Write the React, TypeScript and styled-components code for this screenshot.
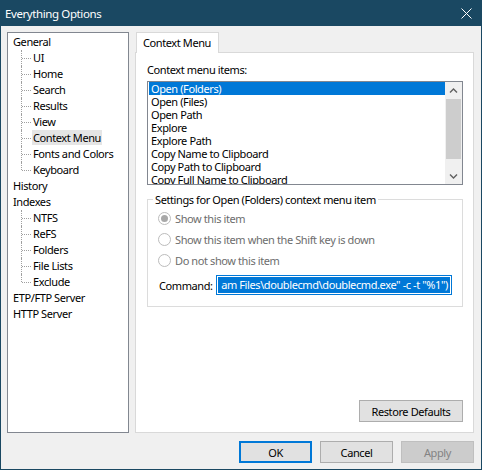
import styled, { createGlobalStyle } from "styled-components";

const GlobalStyle = createGlobalStyle`
  html, body {
    margin: 0;
    padding: 0;
    background: #f0f0f0;
  }
  body {
    font-family: "Noto Sans", "Liberation Sans", sans-serif;
    font-size: 11px;
    letter-spacing: -0.4px;
    color: #000;
  }
  * {
    box-sizing: border-box;
  }
`;

const Window = styled.div`
  display: flex;
  flex-direction: column;
  width: 482px;
  height: 470px;
  background: #f0f0f0;
  border: 1px solid #1a4862;
  border-top: none;
`;

const TitleBar = styled.div`
  display: flex;
  align-items: center;
  justify-content: space-between;
  height: 26px;
  padding: 0 9px 0 4px;
  background: #1a4862;
  color: #fff;
  font-size: 11.5px;
`;

const Body = styled.div`
  display: flex;
  flex: 1;
  gap: 6px;
  padding: 6px 7px 0 6px;
  min-height: 0;
`;

const Tree = styled.div`
  width: 122px;
  padding-top: 1px;
  background: #fff;
  border: 1px solid #828790;
`;

const TopNode = styled.div`
  height: 16px;
  line-height: 16px;
  padding-left: 5px;
`;

const ChildNode = styled.div<{ $last?: boolean }>`
  position: relative;
  height: 16px;
  line-height: 16px;
  padding-left: 25px;

  &::before {
    content: "";
    position: absolute;
    left: 13px;
    top: 0;
    height: ${(p) => (p.$last ? "8px" : "16px")};
    border-left: 1px dotted #a0a0a0;
  }

  &::after {
    content: "";
    position: absolute;
    left: 14px;
    top: 8px;
    width: 9px;
    border-top: 1px dotted #a0a0a0;
  }
`;

const NodeLabel = styled.span<{ $selected?: boolean }>`
  display: inline-block;
  height: 15px;
  line-height: 15px;
  margin-left: -1px;
  padding: 0 1px;
  background: ${(p) => (p.$selected ? "#e5e5e5" : "transparent")};
`;

const RightColumn = styled.div`
  display: flex;
  flex-direction: column;
  flex: 1;
`;

const TabStrip = styled.div`
  display: flex;
  height: 20px;
  padding-left: 1px;
`;

const Tab = styled.div`
  position: relative;
  z-index: 1;
  width: 83px;
  height: 21px;
  padding-left: 6px;
  line-height: 19px;
  background: #fff;
  border: 1px solid #d9d9d9;
  border-bottom: none;
`;

const Panel = styled.div`
  display: flex;
  flex-direction: column;
  flex: 1;
  padding: 9px 10px 10px 11px;
  background: #fff;
  border: 1px solid #d9d9d9;
`;

const FieldLabel = styled.div`
  line-height: 15px;
  margin-bottom: 4px;
`;

const ListBox = styled.div`
  display: flex;
  height: 104px;
  border: 1px solid #828790;
`;

const ListItems = styled.div`
  flex: 1;
  padding-left: 1px;
  overflow: hidden;
`;

const ListItem = styled.div<{ $selected?: boolean }>`
  height: 13px;
  line-height: 13px;
  padding-left: 2px;
  white-space: nowrap;
  background: ${(p) => (p.$selected ? "#0078d7" : "transparent")};
  color: ${(p) => (p.$selected ? "#fff" : "#000")};
`;

const ScrollBar = styled.div`
  display: flex;
  flex-direction: column;
  align-items: center;
  width: 17px;
  background: #f0f0f0;
`;

const ScrollArrow = styled.div`
  display: flex;
  align-items: center;
  justify-content: center;
  width: 100%;
  height: 17px;
`;

const ScrollTrack = styled.div`
  flex: 1;
  width: 100%;
  display: flex;
  justify-content: center;
`;

const Thumb = styled.div`
  width: 15px;
  height: 60px;
  background: #cdcdcd;
`;

const GroupBox = styled.fieldset`
  margin: 7px 0 0;
  padding: 0;
  min-width: 0;
  border: 1px solid #dcdcdc;
`;

const GroupTitle = styled.legend`
  margin-left: 5px;
  padding: 0 2px;
  line-height: 15px;
`;

const GroupBody = styled.div`
  padding: 1px 10px 11px 10px;
`;

const RadioRow = styled.div`
  display: flex;
  align-items: center;
  gap: 4px;
  height: 21px;
  color: #6d6d6d;
`;

const RadioCircle = styled.span<{ $checked?: boolean }>`
  display: flex;
  align-items: center;
  justify-content: center;
  width: 13px;
  height: 13px;
  border-radius: 50%;
  border: 1px solid #bcbcbc;
  background: #fff;

  &::after {
    content: "";
    display: ${(p) => (p.$checked ? "block" : "none")};
    width: 7px;
    height: 7px;
    border-radius: 50%;
    background: #a8a8a8;
  }
`;

const CommandRow = styled.div`
  display: flex;
  align-items: center;
  height: 20px;
  margin-top: 4px;
  padding-left: 1px;
`;

const CommandLabel = styled.span`
  flex: none;
  width: 57px;
`;

const CommandInput = styled.div`
  flex: none;
  width: 236px;
  height: 20px;
  padding: 1px;
  border: 1px solid #0078d7;
  background: #fff;
  overflow: hidden;
`;

const SelectedText = styled.div`
  display: flex;
  justify-content: flex-end;
  height: 100%;
  line-height: 16px;
  padding-right: 2px;
  background: #0078d7;
  color: #fff;
  white-space: nowrap;
  overflow: hidden;
`;

const Button = styled.button<{ $primary?: boolean; $width?: number }>`
  width: ${(p) => p.$width ?? 73}px;
  height: 22px;
  padding: 0;
  font-family: inherit;
  font-size: 11px;
  letter-spacing: inherit;
  color: ${(p) => (p.disabled ? "#838383" : "#000")};
  background: ${(p) => (p.disabled ? "#cccccc" : "#e1e1e1")};
  border: ${(p) =>
    p.$primary
      ? "2px solid #0078d7"
      : p.disabled
      ? "1px solid #bfbfbf"
      : "1px solid #adadad"};
`;

const RestoreRow = styled.div`
  display: flex;
  justify-content: flex-end;
  margin-top: auto;
`;

const Footer = styled.div`
  display: flex;
  justify-content: flex-end;
  gap: 8px;
  padding: 8px 7px 6px;
`;

const treeGroups: { name: string; children: string[] }[] = [
  {
    name: "General",
    children: ["UI", "Home", "Search", "Results", "View", "Context Menu", "Fonts and Colors", "Keyboard"],
  },
  { name: "History", children: [] },
  { name: "Indexes", children: ["NTFS", "ReFS", "Folders", "File Lists", "Exclude"] },
  { name: "ETP/FTP Server", children: [] },
  { name: "HTTP Server", children: [] },
];

const menuItems = [
  "Open (Folders)",
  "Open (Files)",
  "Open Path",
  "Explore",
  "Explore Path",
  "Copy Name to Clipboard",
  "Copy Path to Clipboard",
  "Copy Full Name to Clipboard",
];

const radios = [
  "Show this item",
  "Show this item when the Shift key is down",
  "Do not show this item",
];

const Chevron = ({ down }: { down?: boolean }) => (
  <svg width="9" height="6" viewBox="0 0 9 6">
    <path
      d={down ? "M1 1.5 L4.5 5 L8 1.5" : "M1 4.5 L4.5 1 L8 4.5"}
      fill="none"
      stroke="#606060"
      strokeWidth="1.4"
    />
  </svg>
);

const CloseIcon = () => (
  <svg width="11" height="11" viewBox="0 0 11 11">
    <path d="M0.5 0.5 L10.5 10.5 M10.5 0.5 L0.5 10.5" stroke="#fff" strokeWidth="1" />
  </svg>
);

const App = () => {
  return (
    <>
      <GlobalStyle />
      <Window>
        <TitleBar>
          <span>Everything Options</span>
          <CloseIcon />
        </TitleBar>
        <Body>
          <Tree>
            {treeGroups.map((g) => (
              <div key={g.name}>
                <TopNode>{g.name}</TopNode>
                {g.children.map((c, i) => (
                  <ChildNode key={c} $last={i === g.children.length - 1}>
                    <NodeLabel $selected={c === "Context Menu"}>{c}</NodeLabel>
                  </ChildNode>
                ))}
              </div>
            ))}
          </Tree>
          <RightColumn>
            <TabStrip>
              <Tab>Context Menu</Tab>
            </TabStrip>
            <Panel>
              <FieldLabel>Context menu items:</FieldLabel>
              <ListBox>
                <ListItems>
                  {menuItems.map((m, i) => (
                    <ListItem key={m} $selected={i === 0}>
                      {m}
                    </ListItem>
                  ))}
                </ListItems>
                <ScrollBar>
                  <ScrollArrow>
                    <Chevron />
                  </ScrollArrow>
                  <ScrollTrack>
                    <Thumb />
                  </ScrollTrack>
                  <ScrollArrow>
                    <Chevron down />
                  </ScrollArrow>
                </ScrollBar>
              </ListBox>
              <GroupBox>
                <GroupTitle>Settings for Open (Folders) context menu item</GroupTitle>
                <GroupBody>
                  {radios.map((r, i) => (
                    <RadioRow key={r}>
                      <RadioCircle $checked={i === 0} />
                      {r}
                    </RadioRow>
                  ))}
                  <CommandRow>
                    <CommandLabel>Command:</CommandLabel>
                    <CommandInput>
                      <SelectedText>am Files\doublecmd\doublecmd.exe" -c -t "%1")</SelectedText>
                    </CommandInput>
                  </CommandRow>
                </GroupBody>
              </GroupBox>
              <RestoreRow>
                <Button $width={104}>Restore Defaults</Button>
              </RestoreRow>
            </Panel>
          </RightColumn>
        </Body>
        <Footer>
          <Button $primary>OK</Button>
          <Button>Cancel</Button>
          <Button disabled>Apply</Button>
        </Footer>
      </Window>
    </>
  );
};

export default App;
